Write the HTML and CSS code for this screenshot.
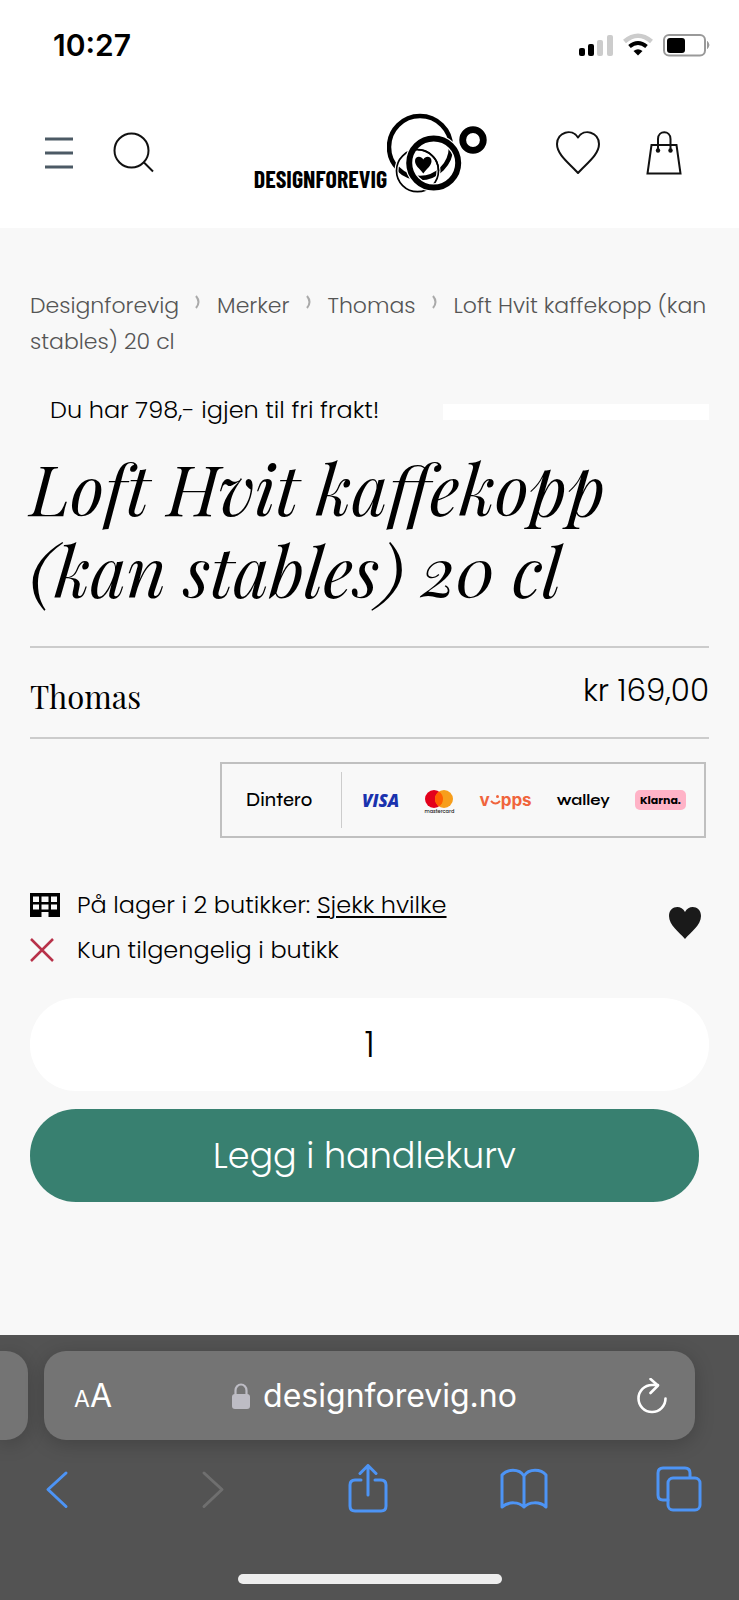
FILE: index.html
```html
<!DOCTYPE html>
<html lang="no">
<head>
<meta charset="utf-8">
<meta name="viewport" content="width=device-width, initial-scale=1">
<title>Loft Hvit kaffekopp (kan stables) 20 cl</title>
<link rel="stylesheet" href="styles.css">
</head>
<body>
<div class="status">
  <span class="time">10:27</span>
  <svg class="status-icons" width="132" height="24" viewBox="0 0 132 24" aria-hidden="true">
    <rect x="0" y="15" width="6" height="8" rx="2"/>
    <rect x="9" y="11" width="6" height="12" rx="2"/>
    <g fill="#ccc"><rect x="18" y="7" width="6" height="16" rx="2"/><rect x="28" y="2" width="6" height="21" rx="2"/></g>
    <path d="M45.500 8.500Q59 -3 72.500 8.500" fill="none" stroke="#ccc" stroke-width="4.500"/>
    <path d="M50.500 13.500Q59 6.500 67.500 13.500" fill="none" stroke="#000" stroke-width="4"/>
    <path d="M54.500 18Q59 14.500 63.500 18L59 22.500Z"/>
    <rect x="85" y="2" width="41" height="20.500" rx="5" fill="none" stroke="#999" stroke-width="2"/>
    <rect x="88" y="5" width="18" height="15" rx="3"/>
    <path d="M128.500 8.500q3 3.500 0 7z" fill="#999" stroke="#999"/>
  </svg>
</div>

<header class="header">
  <div class="left">
    <button class="icon" aria-label="Meny"><svg width="28" height="32" viewBox="0 0 28 32" fill="none" stroke="#4c5a65" stroke-width="2.800"><path d="M0 2h28M0 16h28M0 30h28"/></svg></button>
    <button class="icon" aria-label="Søk"><svg width="42" height="42" viewBox="0 0 42 42" fill="none" stroke="#111" stroke-width="2"><circle cx="18.500" cy="18.500" r="17"/><path d="M31 30.500l9 9"/></svg></button>
  </div>
  <a class="logo" href="#" aria-label="Designforevig">
    <span class="logo-text">DESIGNFOREVIG</span>
    <svg width="100" height="82" viewBox="0 0 100 82" fill="none" stroke="#000">
      <circle cx="33" cy="35" r="31" stroke-width="4.500"/>
      <circle cx="30.500" cy="58.700" r="21" stroke="#fff" stroke-width="4"/>
      <circle cx="30.500" cy="58.700" r="21" stroke-width="1.700"/>
      <circle cx="46.700" cy="51" r="24.500" stroke="#fff" stroke-width="8.500"/>
      <circle cx="46.700" cy="51" r="24.500" stroke-width="6"/>
      <path d="M51.500 58.700A21 21 0 0 0 24 38.700" stroke-width="1.700"/>
      <circle cx="86" cy="28" r="10.300" stroke-width="6.800"/>
      <path d="M36.300 61.500C32 56 28 53.500 28 49C28 44 34 43.500 36.300 47.500C38.500 43.500 44.500 44 44.500 49C44.500 53.500 40.500 56 36.300 61.500Z" fill="#000" stroke="none"/>
    </svg>
  </a>
  <div class="right">
    <button class="icon" aria-label="Favoritter"><svg width="44" height="44" viewBox="0 0 44 44" fill="none" stroke="#111" stroke-width="2" stroke-linejoin="round"><path d="M22 42C14 33 1 24 1 13C1 1 16-3 22 6.500C28-3 43 1 43 13C43 24 30 33 22 42Z"/></svg></button>
    <button class="icon" aria-label="Handlekurv"><svg width="36" height="44" viewBox="0 0 36 44" fill="none" stroke="#111" stroke-width="2"><path d="M5.500 14h25l4 28.500h-33zM12 19V8c0-9 12.500-9 12.500 0v11"/><g fill="#111" stroke="none"><circle cx="12" cy="19.500" r="2.200"/><circle cx="24.500" cy="19.500" r="2.200"/></g></svg></button>
  </div>
</header>

<main class="main">
  <nav class="crumbs" aria-label="Brødsmuler">
    <a href="#">Designforevig</a><svg class="sep" viewBox="0 0 8 14" width="8" height="14"><path d="M2 1q5 6 0 12"/></svg><a href="#">Merker</a><svg class="sep" viewBox="0 0 8 14" width="8" height="14"><path d="M2 1q5 6 0 12"/></svg><a href="#">Thomas</a><svg class="sep" viewBox="0 0 8 14" width="8" height="14"><path d="M2 1q5 6 0 12"/></svg>Loft Hvit kaffekopp (kan stables) 20 cl
  </nav>

  <div class="freight"><span>Du har 798,- igjen til fri frakt!</span><div class="track"></div></div>

  <h1 class="title">Loft Hvit kaffekopp (kan stables) 20 cl</h1>

  <div class="brand-row"><a class="brand" href="#">Thomas</a><span class="price">kr 169,00</span></div>

  <div class="payments">
    <span class="dintero">Dintero</span>
    <div class="methods">
      <span class="visa">VISA</span>
      <span class="mastercard"><svg width="28" height="18" viewBox="0 0 28 18"><circle cx="9" cy="9" r="9" fill="#e3001b"/><circle cx="19" cy="9" r="9" fill="#f79e1b"/><path d="M14 1.500a9 9 0 0 1 0 15a9 9 0 0 1 0-15z" fill="#ff5f00"/></svg><small>mastercard</small></span>
      <span class="vipps">v<svg width="11" height="13" viewBox="0 0 11 13"><path d="M1 7q4.500 5 9 0" fill="none" stroke="#f0643c" stroke-width="2"/><circle cx="7.500" cy="2.500" r="1.500" fill="#f0643c"/></svg>pps</span>
      <span class="walley">walley</span>
      <span class="klarna">Klarna.</span>
    </div>
  </div>

  <div class="stock">
    <ul class="stock-list">
      <li><svg width="30" height="24" viewBox="0 0 30 24"><path d="M0 0h30v24H18.500v-5h-7v5H0z"/><path fill="#f8f8f8" d="M3 3.500h6v5.500H3zM11.500 3.500h7v5.500h-7zM21 3.500h6v5.500h-6zM3 11.500h6v5H3zM11.500 11.500h7v5h-7zM21 11.500h6v5h-6z"/></svg><span>På lager i 2 butikker: <a href="#">Sjekk hvilke</a></span></li>
      <li><svg width="24" height="24" viewBox="0 0 24 24" stroke="#b8324a" stroke-width="2.500"><path d="M1 1l22 22M23 1L1 23"/></svg><span>Kun tilgengelig i butikk</span></li>
    </ul>
    <button class="icon favorite" aria-label="Legg til i favoritter"><svg width="32" height="32" viewBox="0 0 32 32" fill="#1a1a1a"><path d="M16 32C10 25 0 18 0 9C0-1 12-3 16 5C20-3 32-1 32 9C32 18 22 25 16 32Z"/></svg></button>
  </div>

  <form class="buy">
    <input class="qty" type="text" value="1" aria-label="Antall">
    <button class="add" type="button">Legg i handlekurv</button>
  </form>
</main>

<footer class="browser">
  <div class="tabs">
    <div class="tab-prev"></div>
    <div class="address">
      <button class="text-size" aria-label="Tekststørrelse"><small>A</small>A</button>
      <span class="host"><svg width="20" height="26" viewBox="0 0 20 26"><rect x="1" y="11" width="18" height="15" rx="3" fill="#bdbcc4"/><path d="M4.500 12V7.500a5.500 6 0 0 1 11 0V12" fill="none" stroke="#bdbcc4" stroke-width="2.200"/></svg>designforevig.no</span>
      <button class="icon" aria-label="Last inn på nytt"><svg width="32" height="36" viewBox="0 0 32 36" fill="none" stroke="#fff" stroke-width="2.600" stroke-linecap="round" stroke-linejoin="round"><path d="M29.500 20.500A13.500 13.500 0 1 1 16 7h6M14.500 1L22 7.500L14.500 15"/></svg></button>
    </div>
    <div class="tab-next"></div>
  </div>
  <nav class="toolbar" aria-label="Nettleser">
    <button class="icon" aria-label="Tilbake"><svg width="24" height="50" viewBox="0 0 24 50"><path d="M21 9L3 25.500l18 17"/></svg></button>
    <button class="icon off" aria-label="Frem" disabled><svg width="24" height="50" viewBox="0 0 24 50"><path d="M3 9l18 16.500L3 42.500"/></svg></button>
    <button class="icon" aria-label="Del"><svg width="40" height="50" viewBox="0 0 40 50"><path d="M13 16H7q-5 0-5 5v21q0 5 5 5h26q5 0 5-5V21q0-5-5-5h-6M20 31V2M12 9.500l8-8l8 8"/></svg></button>
    <button class="icon" aria-label="Bokmerker"><svg width="48" height="50" viewBox="0 0 48 50"><path d="M24 12C19 4 7 5 2 11V43C9 37 19 38 24 43C29 38 39 37 46 43V11C41 5 29 4 24 12ZM24 12V43"/></svg></button>
    <button class="icon" aria-label="Faner"><svg width="46" height="50" viewBox="0 0 46 50"><path d="M12 36H7q-5 0-5-5V9q0-5 5-5h22q5 0 5 5v4"/><rect x="12" y="14" width="32" height="32" rx="5"/></svg></button>
  </nav>
  <div class="home"></div>
</footer>
</body>
</html>
```
FILE: styles.css
```css
* { box-sizing: border-box; }

body {
  margin: 0;
  min-height: 100vh;
  display: flex;
  flex-direction: column;
  background: #f8f8f8;
  color: #000;
  font-family: Poppins, Inter, "Open Sans", sans-serif;
  font-weight: 300;
}

svg { display: block; flex: none; }
a { color: inherit; text-decoration: none; }
button { font: inherit; color: inherit; border: 0; padding: 0; background: none; }
.icon { display: block; }

.status {
  display: flex;
  justify-content: space-between;
  align-items: center;
  height: 92px;
  padding: 0 28px 2px 53px;
  background: #fff;
}
.time { font-family: Inter, sans-serif; font-size: 30px; font-weight: 600; }

.header {
  display: grid;
  grid-template-columns: 1fr auto 1fr;
  align-items: center;
  height: 136px;
  padding: 0 43px 14px 45px;
  background: #fff;
}
.left, .right { display: flex; align-items: center; }
.left { gap: 40px; }
.right { gap: 46px; justify-content: flex-end; padding-right: 14px; }
.logo { display: flex; align-items: flex-end; }
.logo-text {
  font-family: "Barlow Condensed", "Arial Narrow", "Liberation Sans", sans-serif;
  font-size: 24px;
  font-weight: 700;
  line-height: 30px;
}

.main { padding: 60px 30px 0; }

.crumbs { font-size: 22px; line-height: 36px; color: #555; }
.sep {
  display: inline-block;
  margin: 0 15px;
  vertical-align: 4px;
  fill: none;
  stroke: #aaa;
  stroke-width: 2;
}

.freight {
  display: grid;
  grid-template-columns: 1fr 266px;
  align-items: center;
  margin-top: 32px;
  padding-left: 20px;
  font-size: 24px;
  line-height: 36px;
}
.track { height: 16px; margin-top: 4px; background: #fff; }

.title {
  margin: 18px 0 36px;
  font-family: "Playfair Display", "Liberation Serif", serif;
  font-size: 69px;
  font-style: italic;
  font-weight: 400;
  line-height: 82px;
}

.brand-row {
  display: flex;
  justify-content: space-between;
  height: 93px;
  border: solid #ccc;
  border-width: 2px 0;
  font-size: 31px;
  line-height: 40px;
}
.brand { padding-top: 28px; font-family: "Playfair Display", "Liberation Serif", serif; font-weight: 400; }
.price { padding-top: 22px; }

.payments {
  display: flex;
  align-items: center;
  width: 486px;
  height: 76px;
  margin: 23px 3px 0 auto;
  border: 2px solid #c0c0c0;
}
.dintero {
  flex: none;
  width: 120px;
  padding-left: 24px;
  border-right: 1px solid #ccc;
  font-family: Syne, Inter, sans-serif;
  font-size: 19px;
  font-weight: 500;
  line-height: 56px;
}
.methods { flex: 1; display: flex; align-items: center; justify-content: space-between; padding: 0 18px 0 20px; }
.visa { font-family: "Open Sans", sans-serif; font-size: 17px; font-weight: 800; font-style: italic; color: #1a32ae; }
.mastercard { display: flex; flex-direction: column; align-items: center; padding-top: 6px; }
.mastercard small { font-size: 5px; line-height: 8px; color: #222; font-weight: 500; }
.vipps { display: flex; align-items: center; font-family: Inter, sans-serif; font-size: 17px; font-weight: 700; line-height: 20px; color: #f0643c; }
.walley { font-family: Syne, Inter, sans-serif; font-size: 15px; font-weight: 700; }
.klarna {
  padding: 0 5px;
  border-radius: 5px;
  background: #ffb3c7;
  font-size: 11px;
  font-weight: 700;
  line-height: 20px;
}

.stock { display: flex; justify-content: space-between; align-items: center; margin-top: 44px; padding-right: 8px; }
.stock-list { margin: 0; padding: 0; list-style: none; font-size: 24px; line-height: 45px; }
.stock-list li { display: grid; grid-template-columns: 30px auto; gap: 17px; align-items: center; }
.stock-list a { text-decoration: underline; text-decoration-thickness: 2px; text-underline-offset: 3px; }
.favorite { margin-bottom: 8px; }

.buy { display: grid; gap: 18px; margin-top: 26px; }
.qty, .add {
  height: 93px;
  border: 0;
  border-radius: 46px;
  font: inherit;
  font-size: 35px;
  text-align: center;
}
.qty { width: 100%; background: #fff; color: #000; }
.add { margin-right: 10px; background: #388070; color: #fff; }

.browser { margin-top: auto; padding: 16px 0; background: #535353; color: #fff; font-family: Inter, sans-serif; font-weight: 400; }
.tabs { display: grid; grid-template-columns: 28px 1fr 28px; gap: 16px; }
.tab-prev { background: #747474; border-radius: 0 22px 22px 0; box-shadow: 0 4px 20px #0003; }
.address {
  display: flex;
  justify-content: space-between;
  align-items: center;
  height: 89px;
  padding: 0 27px 0 30px;
  border-radius: 22px;
  background: #747474;
  box-shadow: 0 4px 20px #0003;
}
.text-size { font-size: 32px; }
.text-size small { font-size: 23px; }
.host { display: flex; align-items: center; gap: 12px; font-size: 32px; line-height: 40px; }
.toolbar { display: flex; justify-content: space-between; padding: 24px 36px 0 33px; }
.toolbar .icon { width: 48px; }
.toolbar svg { margin: 0 auto; fill: none; stroke: #4d94f5; stroke-width: 3; stroke-linecap: round; stroke-linejoin: round; }
.toolbar .off svg { stroke: #6f6f6f; }
.home { width: 264px; height: 10px; margin: 60px auto 0; border-radius: 5px; background: #eee; }
```
